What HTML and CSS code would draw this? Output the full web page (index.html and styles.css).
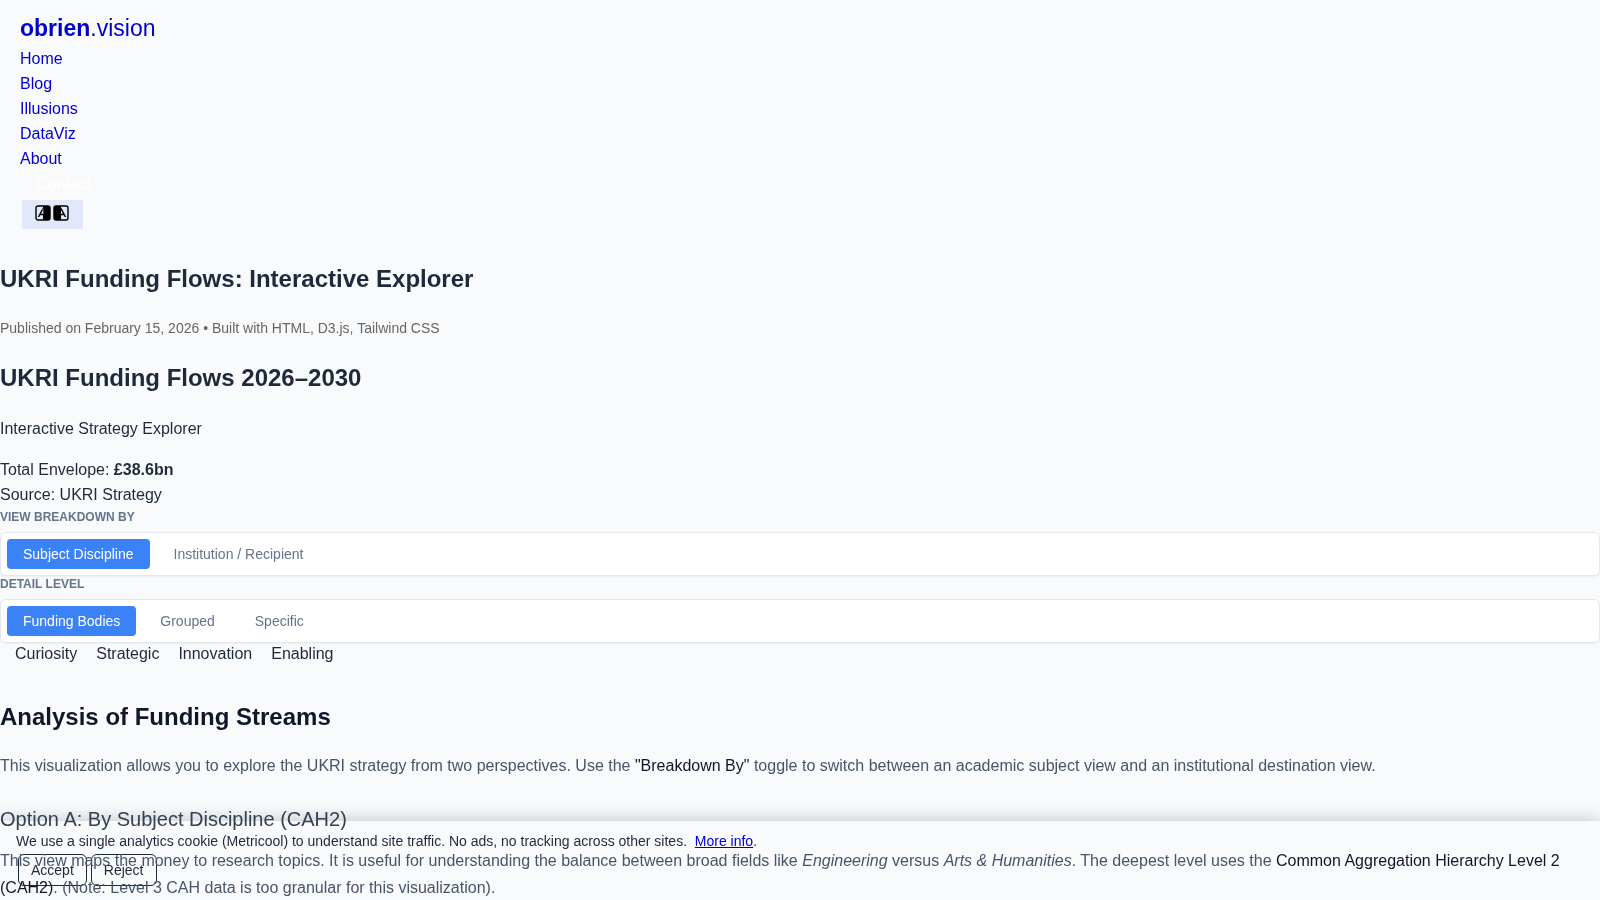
FILE: index.html
```html
<!DOCTYPE html>
<html lang="en">
	<head>
		<meta charset="utf-8">
		<title>UKRI Funding Flows: Interactive Explorer</title>
		<link rel="stylesheet" href="styles.css">
	</head>
	<body>
		<header class="site-header">
			<a class="logo" href="#"><strong>obrien</strong>.vision</a>
			<nav class="site-nav">
				<a href="#">Home</a>
				<a href="#">Blog</a>
				<a href="#">Illusions</a>
				<a href="#">DataViz</a>
				<a href="#">About</a>
				<a class="contact" href="#">Contact</a>
			</nav>
			<button class="contrast-btn" type="button" aria-label="Toggle contrast">
				<svg width="16" height="16" viewBox="0 0 16 16">
					<rect x="1" y="1" width="14" height="14" rx="2" fill="none" stroke="#000" stroke-width="1.4"/>
					<path d="M8 1h5a2 2 0 0 1 2 2v10a2 2 0 0 1-2 2H8z"/>
					<path d="M3.500 12L8 3.500M5 9.500h3" fill="none" stroke="#000" stroke-width="1.500"/>
					<path d="M8 3.500V9" stroke="#e0e8f9" stroke-width="0.500"/>
				</svg>
				<svg width="16" height="16" viewBox="0 0 16 16">
					<rect x="1" y="1" width="14" height="14" rx="2" fill="none" stroke="#000" stroke-width="1.4"/>
					<path d="M8 1H3a2 2 0 0 0-2 2v10a2 2 0 0 0 2 2h5z"/>
					<path d="M8 3.500L12.500 12M8 9.500h3" fill="none" stroke="#000" stroke-width="1.500"/>
				</svg>
			</button>
		</header>
		<main>
			<h2>UKRI Funding Flows: Interactive Explorer</h2>
			<p class="meta">Published on February 15, 2026 • Built with HTML, D3.js, Tailwind CSS</p>

			<h2>UKRI Funding Flows 2026–2030</h2>
			<p>Interactive Strategy Explorer</p>
			<div class="totals">
				<div>Total Envelope: <strong>£38.6bn</strong></div>
				<div>Source: UKRI Strategy</div>
			</div>

			<!-- view switches -->
			<div class="toggle-label">VIEW BREAKDOWN BY</div>
			<div class="toggle-group">
				<button class="toggle active" type="button">Subject Discipline</button>
				<button class="toggle" type="button">Institution / Recipient</button>
			</div>
			<div class="toggle-label">DETAIL LEVEL</div>
			<div class="toggle-group">
				<button class="toggle active" type="button">Funding Bodies</button>
				<button class="toggle" type="button">Grouped</button>
				<button class="toggle" type="button">Specific</button>
			</div>
			<div class="legend">
				<span>Curiosity</span>
				<span>Strategic</span>
				<span>Innovation</span>
				<span>Enabling</span>
			</div>

			<section class="analysis">
				<h2>Analysis of Funding Streams</h2>
				<p>This visualization allows you to explore the UKRI strategy from two perspectives. Use the <b>"Breakdown By"</b> toggle to switch between an academic subject view and an institutional destination view.</p>
				<h3>Option A: By Subject Discipline (CAH2)</h3>
				<p>This view maps the money to research topics. It is useful for understanding the balance between broad fields like <em>Engineering</em> versus <em>Arts &amp; Humanities</em>. The deepest level uses the <b>Common Aggregation Hierarchy Level 2 (CAH2)</b>. (Note: Level 3 CAH data is too granular for this visualization).</p>
			</section>
		</main>
		<div class="cookie-bar">
			<div>We use a single analytics cookie (Metricool) to understand site traffic. No ads, no tracking across other sites. &nbsp;<a href="#">More info</a>.</div>
			<div class="cookie-actions">
				<button type="button">Accept</button>
				<button type="button">Reject</button>
			</div>
		</div>
	</body>
</html>
```
FILE: styles.css
```css
*{
	box-sizing: border-box;
}
html{
	background-color: #f9fafc;
}
body{
	margin: 0;
	font-family: "Liberation Sans", Arial, sans-serif;
	font-size: 16px;
	line-height: 25px;
	color: #1e293b;
	overflow: hidden;
}
.site-header{
	padding: 10px 20px 11px;
}
.site-header a{
	display: block;
	color: #0000cc;
	text-decoration: none;
}
.site-header .logo{
	font-size: 23px;
	line-height: 36px;
}
.site-header .contact{
	padding: 0 16px;
	color: #fff;
}
.contrast-btn{
	display: flex;
	gap: 2px;
	margin: 4px 2px 0;
	padding: 5px 14px 8px 13px;
	border: 0;
	background-color: #e0e8f9;
}
h2{
	margin: 20px 0 19px;
	font-size: 24px;
	line-height: 38px;
}
p{
	margin: 16px 0;
}
.meta{
	margin: 20px 0;
	font-size: 14px;
	line-height: 21px;
	color: #666;
}
.totals{
	padding-bottom: 2px;
}
.toggle-label{
	padding-bottom: 7px;
	font-size: 12px;
	line-height: 16px;
	font-weight: bold;
	color: #64748b;
}
.toggle-group{
	display: flex;
	gap: 8px;
	padding: 6px;
	border: 1px solid #e2e8f0;
	border-radius: 6px;
	background-color: #fff;
	box-shadow: 0 1px 2px rgba(0,0,0,0.05);
}
.toggle{
	padding: 6px 16px;
	border: 0;
	border-radius: 4px;
	background-color: transparent;
	font-family: inherit;
	font-size: 14px;
	line-height: 18px;
	color: #64748b;
}
.toggle.active{
	background-color: #3b82f6;
	color: #fff;
}
.legend{
	display: flex;
	gap: 19px;
	padding-left: 15px;
	line-height: 21px;
}
.analysis{
	padding-top: 14px;
	line-height: 27px;
	color: #475569;
}
.analysis h2{
	margin-bottom: 16px;
	color: #0f172a;
}
.analysis h3{
	margin: 24px 0 12px;
	font-size: 20px;
	line-height: 32px;
	font-weight: normal;
	color: #334155;
}
.analysis p{
	margin: 12px 0;
}
.analysis b{
	font-weight: normal;
	color: #0f172a;
}
/* sits behind the page text */
.cookie-bar{
	position: fixed;
	left: 0;
	right: 0;
	bottom: 0;
	z-index: -1;
	padding: 9px 16px 14px;
	font-size: 14px;
	line-height: 22px;
	background-color: #f9fafc;
	box-shadow: 0 -2px 16px rgba(0,0,0,0.2);
}
.cookie-bar a{
	color: #0000cc;
}
.cookie-actions{
	display: flex;
	gap: 4px;
	padding: 2px 2px 0;
}
.cookie-actions button{
	padding: 6px 12px;
	border: 1px solid #1e293b;
	border-radius: 6px;
	background-color: transparent;
	font-family: inherit;
	font-size: 14px;
	line-height: 18px;
	color: #1e293b;
}
```
